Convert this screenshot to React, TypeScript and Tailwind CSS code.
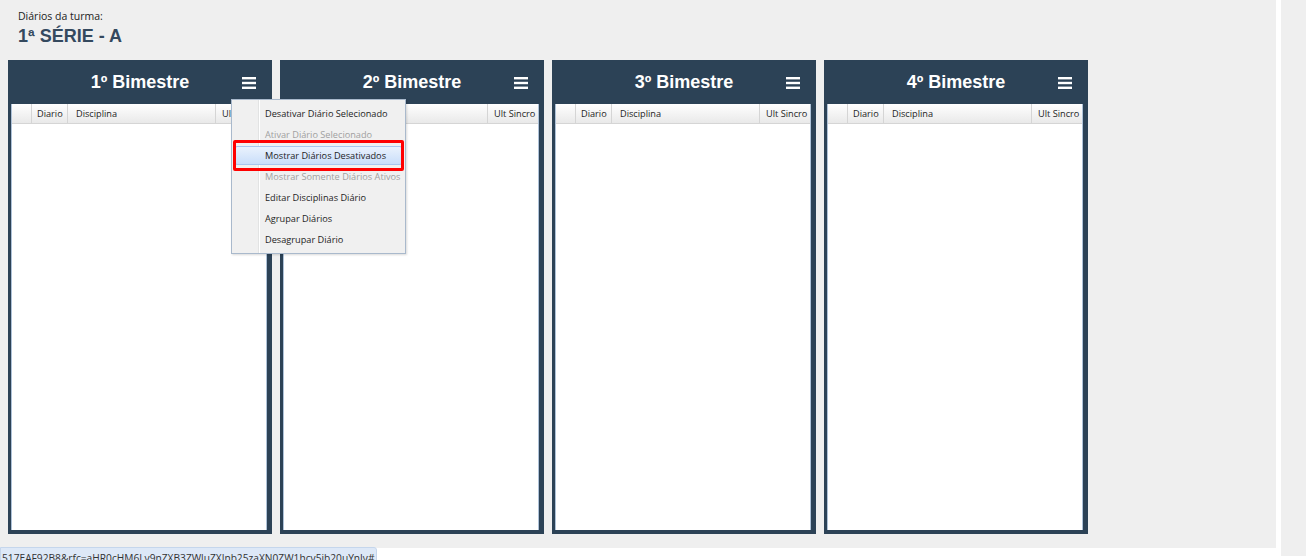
import { Fragment } from "react"

const bimestres = ["1º Bimestre", "2º Bimestre", "3º Bimestre", "4º Bimestre"]

const menuItems = [
	{ label: "Desativar Diário Selecionado", disabled: false },
	{ label: "Ativar Diário Selecionado", disabled: true },
	{ label: "Mostrar Diários Desativados", disabled: false, active: true },
	{ label: "Mostrar Somente Diários Ativos", disabled: true },
	{ label: "Editar Disciplinas Diário", disabled: false },
	{ label: "Agrupar Diários", disabled: false },
	{ label: "Desagrupar Diário", disabled: false },
]

function Hamburger() {
	return (
		<svg width="14" height="12" viewBox="0 0 14 12" className="block">
			<rect x="0" y="0" width="14" height="2.4" fill="#fff" />
			<rect x="0" y="4.8" width="14" height="2.4" fill="#fff" />
			<rect x="0" y="9.6" width="14" height="2.4" fill="#fff" />
		</svg>
	)
}

function ContextMenu() {
	return (
		<div className="absolute left-[223px] top-[39px] z-10 w-[175px] border border-[#a9b9cc] bg-[#f0f0f0] py-[3px] shadow-[1px_1px_2px_rgba(0,0,0,0.15)]">
			<div className="absolute bottom-0 left-[26px] top-0 w-px bg-[#e2e3e3]" />
			<div className="absolute bottom-0 left-[27px] top-0 w-px bg-white" />
			{menuItems.map((item) => (
				<div key={item.label} className="relative h-[21px]">
					{item.active && (
						<Fragment>
							<div className="absolute inset-x-[3px] inset-y-[1px] rounded-[2px] border border-[#a8c6ee] bg-gradient-to-b from-[#eaf2fd] to-[#c9defa]" />
							<div className="absolute -bottom-[5px] -top-[5px] left-[1px] right-[1px] rounded-[2px] border-[3px] border-[#ff0000]" />
						</Fragment>
					)}
					<span
						className={`relative block whitespace-nowrap pl-[33px] text-[9.2px] leading-[21px] ${
							item.disabled ? "text-[#a0a0a0]" : "text-[#1e1e1e]"
						}`}
					>
						{item.label}
					</span>
				</div>
			))}
		</div>
	)
}

function Panel({ title, withMenu }: { title: string; withMenu?: boolean }) {
	return (
		<div className="relative flex h-[474px] w-[264px] flex-col bg-[#2c4256]">
			<div className="flex h-[44px] items-center">
				<div className="w-[40px]" />
				<h2 className="flex-1 text-center font-['Liberation_Sans',Arial,sans-serif] text-[18px] font-bold text-white">
					{title}
				</h2>
				<div className="flex w-[40px] justify-start pl-[10px] pt-[1px]">
					<Hamburger />
				</div>
			</div>
			<div className="mb-[4px] ml-[3px] mr-[5px] flex flex-1 flex-col border-x border-[#aec2d8] bg-white">
				<div className="flex h-[20px] border-b border-[#d5d5d5] bg-gradient-to-b from-white to-[#e9e9e9] text-[9.2px] leading-[20px] text-[#1e1e1e]">
					<div className="w-[20px] border-r border-[#d5d5d5]" />
					<div className="w-[36px] border-r border-[#d5d5d5] pl-[5px]">Diario</div>
					<div className="flex-1 border-r border-[#d5d5d5] pl-[8px]">Disciplina</div>
					<div className="w-[50px] overflow-hidden whitespace-nowrap pl-[6px]">Ult Sincro</div>
				</div>
				<div className="flex-1" />
			</div>
			{withMenu && <ContextMenu />}
		</div>
	)
}

export default function App() {
	return (
		<div className="relative h-[560px] w-[1306px] overflow-hidden bg-white font-['Open_Sans','Noto_Sans',sans-serif]">
			<div className="flex gap-[5px]">
				<div className="h-[548px] w-[1276px] bg-[#efefef]">
					<div className="px-[18px] pt-[9px]">
						<p className="text-[10.5px] leading-[14px] text-[#222]">Diários da turma:</p>
						<h1 className="mt-[2px] font-['Liberation_Sans',Arial,sans-serif] text-[18px] font-bold leading-[22px] text-[#34495e]">
							1ª SÉRIE - A
						</h1>
					</div>
					<div className="mt-[13px] flex gap-[8px] pl-[8px]">
						{bimestres.map((b, i) => (
							<Panel key={b} title={b} withMenu={i === 0} />
						))}
					</div>
				</div>
				<div className="h-[556px] w-[25px] bg-[#efefef]" />
			</div>
			<div className="absolute bottom-[-9px] left-0 whitespace-nowrap rounded-tr-[3px] border border-[#c5d6ec] bg-[#dde8f7] px-[1px] text-[10.2px] leading-[20px] text-[#333]">
				517EAF92B8&amp;rfc=aHR0cHM6Ly9nZXB3ZWluZXJnb25zaXN0ZW1hcy5ib20uYnJy#
			</div>
		</div>
	)
}
